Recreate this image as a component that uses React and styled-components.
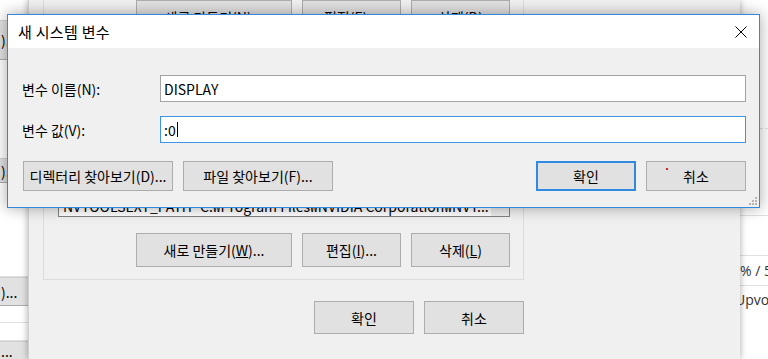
import React from 'react';
import styled, { createGlobalStyle } from 'styled-components';

const GlobalStyle = createGlobalStyle`
  html, body {
    margin: 0;
    padding: 0;
  }
  body {
    width: 768px;
    height: 359px;
    overflow: hidden;
    background: #fff;
    color: #000;
    font-family: "Noto Sans CJK KR", "Noto Sans", sans-serif;
    font-size: 14px;
  }
`;

const Screen = styled.div`
  position: relative;
  display: flex;
  width: 768px;
  height: 359px;
  overflow: hidden;
`;

/* page strips visible left and right of the background window */
const PageStrip = styled.div`
  flex: none;
  width: 28px;
  background: #fff;
  display: flex;
  flex-direction: column;
  overflow: hidden;
`;

const StripRow = styled.div`
  flex: none;
  height: ${(p) => p.h}px;
  box-sizing: border-box;
  border-bottom: ${(p) => (p.line ? `1px ${p.dashed ? 'dashed' : 'solid'} #e0e0e0` : 'none')};
  padding-top: ${(p) => p.pt || 0}px;
  color: #333;
  white-space: nowrap;
  font-family: "Open Sans", "Noto Sans", sans-serif;
  font-size: 14px;
  display: flex;
  align-items: ${(p) => (p.top ? 'flex-start' : 'center')};
`;

const StripButton = styled.div`
  flex: none;
  height: ${(p) => p.h}px;
  box-sizing: border-box;
  background: #e1e1e1;
  border-top: 1px solid #cfcfcf;
  border-bottom: 1px solid #adadad;
  display: flex;
  align-items: center;
  padding-left: 1px;
  white-space: nowrap;
`;

/* background window: environment variables */
const EnvWindow = styled.div`
  position: relative;
  z-index: 1;
  flex: none;
  width: 712px;
  box-sizing: border-box;
  background: #f0f0f0;
  border-left: 1px solid #d0d0d0;
  padding-left: 14px;
  box-shadow: 0 0 7px rgba(0, 0, 0, 0.35);
  display: flex;
  flex-direction: column;
`;

const GroupBox = styled.div`
  width: 481px;
  box-sizing: border-box;
  border: 1px solid #dcdcdc;
  border-top: ${(p) => (p.open ? 'none' : '1px solid #dcdcdc')};
  padding: ${(p) => p.pt || 0}px 13px 12px 14px;
  display: flex;
  flex-direction: column;
  margin-top: ${(p) => p.mt || 0}px;
`;

const ButtonRow = styled.div`
  display: flex;
  justify-content: flex-end;
  gap: 10px;
  margin-top: ${(p) => p.mt || 0}px;
  width: ${(p) => (p.w ? `${p.w}px` : 'auto')};
`;

const WinButton = styled.div`
  position: relative;
  flex: none;
  width: ${(p) => p.w}px;
  height: ${(p) => p.h || 34}px;
  box-sizing: border-box;
  background: #e1e1e1;
  border: ${(p) => (p.primary ? '2px solid #2f8ae0' : '1px solid #adadad')};
  display: flex;
  align-items: center;
  justify-content: center;
  font-size: 14px;
  white-space: nowrap;
  color: #000;
`;

const ListBox = styled.div`
  height: 127px;
  box-sizing: border-box;
  border: 1px solid #828282;
  background: #fff;
  display: flex;
  overflow: hidden;
`;

const ListRows = styled.div`
  flex: 1;
  min-width: 0;
  display: flex;
  flex-direction: column;
  justify-content: flex-end;
`;

const ListRow = styled.div`
  height: 20px;
  display: flex;
  align-items: center;
  white-space: nowrap;
  overflow: hidden;
`;

const NameCell = styled.span`
  flex: none;
  width: 141px;
  padding-left: 4px;
  box-sizing: border-box;
  overflow: hidden;
`;

const ValueCell = styled.span`
  flex: 1;
  overflow: hidden;
`;

const ScrollBar = styled.div`
  flex: none;
  width: 18px;
  background: #ececec;
`;

/* foreground dialog */
const Dialog = styled.div`
  position: absolute;
  z-index: 2;
  left: 7px;
  top: 14px;
  width: 753px;
  height: 194px;
  box-sizing: border-box;
  border: 1px solid #3289dc;
  background: #f0f0f0;
  box-shadow: 0 0 14px rgba(0, 0, 0, 0.35);
  display: flex;
  flex-direction: column;
`;

const TitleBar = styled.div`
  flex: none;
  height: 33px;
  background: #fff;
  display: flex;
  align-items: center;
  justify-content: space-between;
  padding: 0 12px 0 10px;
`;

const Title = styled.span`
  font-size: 15px;
  letter-spacing: 0.3px;
`;

const DialogBody = styled.div`
  flex: 1;
  position: relative;
  padding: 27px 13px 0 14px;
  display: flex;
  flex-direction: column;
`;

const FieldRow = styled.div`
  display: flex;
  align-items: center;
  margin-top: ${(p) => p.mt || 0}px;
`;

const FieldLabel = styled.label`
  flex: none;
  width: 138px;
`;

const TextBox = styled.div`
  flex: 1;
  height: 27px;
  box-sizing: border-box;
  background: #fff;
  border: 1px solid ${(p) => (p.focused ? '#3c94e4' : '#a3a3a3')};
  padding-left: 3px;
  display: flex;
  align-items: center;
  white-space: nowrap;
`;

const Caret = styled.span`
  width: 1px;
  height: 15px;
  background: #000;
  margin-left: 1px;
`;

const DialogButtons = styled.div`
  display: flex;
  justify-content: space-between;
  margin-top: 18px;
  padding-left: 1px;
`;

const ButtonGroup = styled.div`
  display: flex;
  gap: 10px;
`;

const CursorDot = styled.span`
  position: absolute;
  left: 19px;
  top: 6px;
  width: 2px;
  height: 2px;
  background: #e02020;
`;

const Grip = styled.svg`
  position: absolute;
  right: 2px;
  bottom: 2px;
`;

const CloseIcon = () => (
  <svg width="12" height="12" viewBox="0 0 12 12">
    <path d="M0.5 0.5 L11.5 11.5 M11.5 0.5 L0.5 11.5" stroke="#000" strokeWidth="1" fill="none" />
  </svg>
);

const ResizeGrip = () => (
  <Grip width="10" height="10" viewBox="0 0 10 10">
    {[
      [8, 0],
      [5, 3], [8, 3],
      [2, 6], [5, 6], [8, 6],
    ].map(([x, y]) => (
      <rect key={`${x}-${y}`} x={x} y={y + 2} width="2" height="2" fill="#b4b4b4" />
    ))}
  </Grip>
);

const App = () => (
  <>
    <GlobalStyle />
    <Screen>
      <PageStrip>
        <StripRow h={20} />
        <StripButton h={40}>)...</StripButton>
        <StripRow h={98} />
        <StripButton h={25}>)...</StripButton>
        <StripRow h={94} line />
        <StripButton h={29}>)...</StripButton>
        <StripRow h={17} line />
        <StripRow h={18} line />
        <StripButton h={19}>...</StripButton>
      </PageStrip>

      <EnvWindow>
        <GroupBox open>
          <ButtonRow>
            <WinButton w={156}>새로 만들기(<u>N</u>)...</WinButton>
            <WinButton w={99}>편집(<u>E</u>)...</WinButton>
            <WinButton w={99}>삭제(<u>D</u>)</WinButton>
          </ButtonRow>
        </GroupBox>

        <GroupBox mt={14} pt={28}>
          <ListBox>
            <ListRows>
              <ListRow>
                <NameCell>NVTOOLSEXT_PATH</NameCell>
                <ValueCell>C:₩Program Files₩NVIDIA Corporation₩NVT...</ValueCell>
              </ListRow>
            </ListRows>
            <ScrollBar />
          </ListBox>
          <ButtonRow mt={16}>
            <WinButton w={156}>새로 만들기(<u>W</u>)...</WinButton>
            <WinButton w={99}>편집(<u>I</u>)...</WinButton>
            <WinButton w={99}>삭제(<u>L</u>)</WinButton>
          </ButtonRow>
        </GroupBox>

        <ButtonRow w={481} mt={21}>
          <WinButton w={100} h={33}>확인</WinButton>
          <WinButton w={100} h={33}>취소</WinButton>
        </ButtonRow>
      </EnvWindow>

      <PageStrip>
        <StripRow h={129} line dashed />
        <StripRow h={87} line />
        <StripRow h={40} line />
        <StripRow h={30} line>% / 5</StripRow>
        <StripRow h={60} top pt={4}>
          <span style={{ marginLeft: -5 }}>Upvotes</span>
        </StripRow>
      </PageStrip>

      <Dialog>
        <TitleBar>
          <Title>새 시스템 변수</Title>
          <CloseIcon />
        </TitleBar>
        <DialogBody>
          <FieldRow>
            <FieldLabel>변수 이름(N):</FieldLabel>
            <TextBox>DISPLAY</TextBox>
          </FieldRow>
          <FieldRow mt={14}>
            <FieldLabel>변수 값(V):</FieldLabel>
            <TextBox focused>
              :0
              <Caret />
            </TextBox>
          </FieldRow>
          <DialogButtons>
            <ButtonGroup>
              <WinButton w={150} h={30}>디렉터리 찾아보기(D)...</WinButton>
              <WinButton w={150} h={30}>파일 찾아보기(F)...</WinButton>
            </ButtonGroup>
            <ButtonGroup>
              <WinButton w={100} h={30} primary>확인</WinButton>
              <WinButton w={100} h={30}>
                <CursorDot />
                취소
              </WinButton>
            </ButtonGroup>
          </DialogButtons>
          <ResizeGrip />
        </DialogBody>
      </Dialog>
    </Screen>
  </>
);

export default App;
